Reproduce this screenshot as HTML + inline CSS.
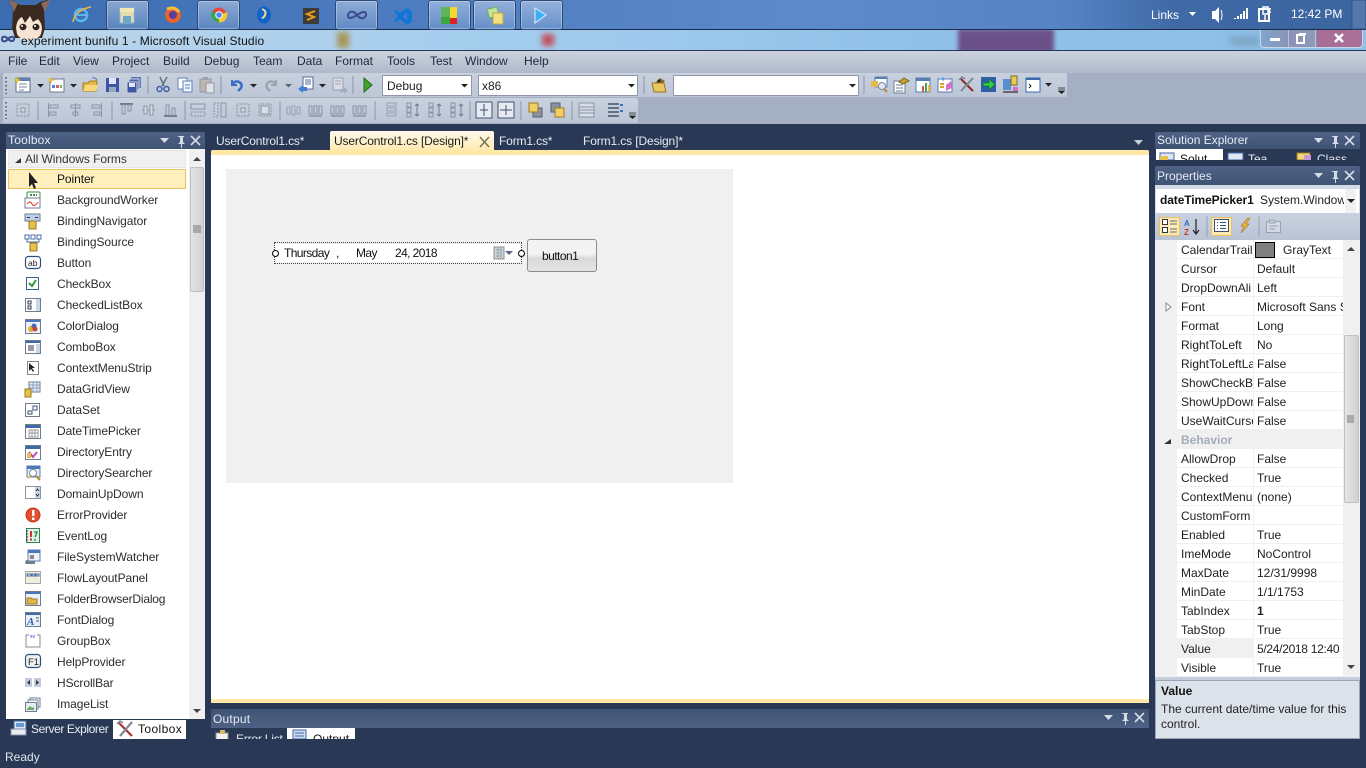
<!DOCTYPE html>
<html><head><meta charset="utf-8"><title>experiment bunifu 1 - Microsoft Visual Studio</title>
<style>
html,body{margin:0;padding:0;width:1366px;height:768px;overflow:hidden;background:#293955}
body{position:relative;font:12px "Liberation Sans",sans-serif;color:#1e1e1e}
div,span.t{position:absolute;white-space:nowrap}
.t{line-height:16px}
.w{color:#fff}
.m{top:53px;color:#1b2840;line-height:16px;position:absolute}
.h{background:linear-gradient(#4f6285,#3f5375)}
.r{position:absolute;left:1177px;width:166px;height:18px;border-bottom:1px solid #f0f0f0;background:#fff;line-height:20px}
.r b,.r i{position:absolute;top:0;font-style:normal;font-weight:normal;overflow:hidden;height:18px}
.r b{left:4px;width:72px}
.r i{left:80px;width:86px}
.r u{position:absolute;left:76px;top:0;width:1px;height:19px;background:#f0f0f0}
.tb{position:absolute;left:57px;line-height:16px;color:#2c2c2c;letter-spacing:-.08px}
.tk{position:absolute;top:0;height:28px;border:1px solid #2c4a78;border-radius:3px;background:linear-gradient(rgba(255,255,255,.38),rgba(255,255,255,.12));box-shadow:inset 0 0 0 1px rgba(255,255,255,.3)}
.cb{position:absolute;background:#fff;border:1px solid #8d97a8;border-radius:1px;height:21px;line-height:21px;box-sizing:border-box}
</style></head><body>

<!-- taskbar -->
<div style="left:0;top:0;width:1366px;height:29px;background:linear-gradient(90deg,#3b6cb0,#4d7dc0 30%,#5d8aca 60%,#5583c4 78%,#3f6aa6 86%,#3c659f)"></div>
<div style="left:0;top:29px;width:1366px;height:1px;background:#1b2b47"></div>
<div class="tk" style="left:106px;width:41px"></div>
<div class="tk" style="left:197px;width:41px"></div>
<div class="tk" style="left:335px;width:41px"></div>
<div class="tk" style="left:428px;width:41px"></div>
<div class="tk" style="left:473px;width:41px"></div>
<div class="tk" style="left:520px;width:41px"></div>
<div class="t w" style="left:1151px;top:7px">Links</div>
<div class="t w" style="left:1291px;top:6px">12:42 PM</div>

<!-- title -->
<div style="left:0;top:30px;width:1366px;height:20px;background:linear-gradient(90deg,#bcd5ea,#a8cfee 30%,#8fc0e8 70%,#8dbfe8);overflow:hidden">
 <div style="left:337px;top:2px;width:12px;height:16px;background:#a8985a;filter:blur(3px)"></div>
 <div style="left:542px;top:4px;width:12px;height:12px;background:#c25060;filter:blur(3px)"></div>
 <div style="left:958px;top:-1px;width:96px;height:24px;background:#6c5088;filter:blur(2px)"></div>
 <div style="left:1230px;top:6px;width:30px;height:10px;background:#7fa8c8;filter:blur(3px)"></div>
</div>
<div style="left:1260px;top:30px;width:101px;height:17px;background:linear-gradient(90deg,#7fa6cc 0,#8b93b8 28%,#8d9ab9 54%,#a66d96 56%,#ab7097 100%);border:1px solid #c9d8e8;border-top:0;border-radius:0 0 4px 4px"></div>
<div style="left:0;top:50px;width:1366px;height:1px;background:#24375a"></div>

<!-- menu -->
<div style="left:0;top:51px;width:1366px;height:22px;background:linear-gradient(#ccd3de,#aeb8c9)"></div>
<div style="left:0;top:73px;width:1366px;height:51px;background:#a4afc4"></div>
<span class="m" style="left:8px">File</span><span class="m" style="left:39px">Edit</span><span class="m" style="left:73px">View</span><span class="m" style="left:112px">Project</span><span class="m" style="left:163px">Build</span><span class="m" style="left:204px">Debug</span><span class="m" style="left:253px">Team</span><span class="m" style="left:297px">Data</span><span class="m" style="left:335px">Format</span><span class="m" style="left:387px">Tools</span><span class="m" style="left:430px">Test</span><span class="m" style="left:465px">Window</span><span class="m" style="left:524px">Help</span>

<!-- toolbars -->
<div style="left:3px;top:73px;width:1064px;height:24px;background:linear-gradient(#c9d1de,#bcc6d6);border-radius:2px"></div>
<div style="left:3px;top:98px;width:635px;height:25px;background:linear-gradient(#c9d1de,#bcc6d6);border-radius:2px"></div>
<div class="cb" style="left:382px;top:75px;width:90px;padding-left:4px">Debug</div>
<div class="cb" style="left:478px;top:75px;width:160px;padding-left:3px">x86</div>
<div class="cb" style="left:673px;top:75px;width:186px"></div>

<!-- dark area -->
<div style="left:0;top:124px;width:1366px;height:644px;background:#293955"></div>

<!-- toolbox -->
<div class="h" style="left:6px;top:132px;width:199px;height:17px;border-radius:2px 2px 0 0"></div>
<div class="t w" style="left:8px;top:132px;color:#e6ebf3;letter-spacing:.2px">Toolbox</div>
<div style="left:6px;top:149px;width:183px;height:570px;background:#fff"></div>
<div style="left:189px;top:149px;width:16px;height:570px;background:#f0f0f0"></div>
<div style="left:190px;top:167px;width:14px;height:125px;background:linear-gradient(90deg,#e4e4e4,#cfcfcf);border-radius:2px;box-shadow:inset 0 0 0 1px #c0c0c0"></div>
<div style="left:8px;top:150px;width:178px;height:18px;background:#f0f0f0;border:1px solid #e6e6e6;box-sizing:border-box"></div>
<div class="t" style="left:25px;top:151px;color:#333;letter-spacing:-.05px">All Windows Forms</div>
<div style="left:8px;top:169px;width:178px;height:20px;box-sizing:border-box;background:#ffefbd;border:1px solid #e5c365"></div>
<span class="tb" style="top:171px;color:#111">Pointer</span>
<span class="tb" style="top:192px">BackgroundWorker</span>
<span class="tb" style="top:213px">BindingNavigator</span>
<span class="tb" style="top:234px">BindingSource</span>
<span class="tb" style="top:255px">Button</span>
<span class="tb" style="top:276px">CheckBox</span>
<span class="tb" style="top:297px">CheckedListBox</span>
<span class="tb" style="top:318px">ColorDialog</span>
<span class="tb" style="top:339px">ComboBox</span>
<span class="tb" style="top:360px">ContextMenuStrip</span>
<span class="tb" style="top:381px">DataGridView</span>
<span class="tb" style="top:402px">DataSet</span>
<span class="tb" style="top:423px">DateTimePicker</span>
<span class="tb" style="top:444px">DirectoryEntry</span>
<span class="tb" style="top:465px">DirectorySearcher</span>
<span class="tb" style="top:486px">DomainUpDown</span>
<span class="tb" style="top:507px">ErrorProvider</span>
<span class="tb" style="top:528px">EventLog</span>
<span class="tb" style="top:549px">FileSystemWatcher</span>
<span class="tb" style="top:570px">FlowLayoutPanel</span>
<span class="tb" style="top:591px;letter-spacing:-.2px">FolderBrowserDialog</span>
<span class="tb" style="top:612px">FontDialog</span>
<span class="tb" style="top:633px">GroupBox</span>
<span class="tb" style="top:654px">HelpProvider</span>
<span class="tb" style="top:675px">HScrollBar</span>
<span class="tb" style="top:696px">ImageList</span>

<div style="left:113px;top:720px;width:73px;height:19px;background:#fff"></div>
<div class="t w" style="left:31px;top:721px;color:#e8edf4;letter-spacing:-.4px">Server Explorer</div>
<div class="t" style="left:138px;top:721px;color:#111;letter-spacing:.4px">Toolbox</div>
<div class="t" style="left:5px;top:749px;color:#dfe5ee">Ready</div>

<!-- document -->
<div class="t w" style="left:216px;top:133px;color:#e6ebf3;letter-spacing:-.15px">UserControl1.cs*</div>
<div style="left:330px;top:131px;width:164px;height:20px;background:linear-gradient(#fffaf0,#ffe9ac);border-radius:2px 2px 0 0"></div>
<div class="t" style="left:334px;top:133px;color:#1c1c1c;letter-spacing:-.15px">UserControl1.cs [Design]*</div>
<div class="t w" style="left:499px;top:133px;color:#e6ebf3;letter-spacing:-.15px">Form1.cs*</div>
<div class="t w" style="left:583px;top:133px;color:#e6ebf3;letter-spacing:-.12px">Form1.cs [Design]*</div>
<div style="left:211px;top:150px;width:938px;height:553px;background:#fff;border-radius:2px"></div>
<div style="left:211px;top:150px;width:938px;height:5px;background:#ffe8a6;border-radius:2px 2px 0 0"></div>
<div style="left:211px;top:699px;width:938px;height:4px;background:#ffe8a6"></div>
<div style="left:226px;top:169px;width:507px;height:314px;background:#f0f0f0"></div>
<div style="left:274px;top:242px;width:248px;height:22px;box-sizing:border-box;border:1px dotted #444"></div>
<div style="left:276px;top:244px;width:244px;height:18px;background:#fff"></div>
<div class="t" style="left:284px;top:245px;letter-spacing:-.6px;color:#111">Thursday</div>
<div class="t" style="left:336px;top:245px;color:#111">,</div>
<div class="t" style="left:356px;top:245px;letter-spacing:-.6px;color:#111">May</div>
<div class="t" style="left:395px;top:245px;letter-spacing:-.6px;color:#111">24, 2018</div>
<div style="left:272px;top:250px;width:5px;height:5px;background:#fff;border:1px solid #000;border-radius:50%"></div>
<div style="left:518px;top:250px;width:5px;height:5px;background:#fff;border:1px solid #000;border-radius:50%"></div>
<div style="left:527px;top:239px;width:70px;height:33px;box-sizing:border-box;background:linear-gradient(#f3f3f3 45%,#d9d9d9 60%,#e4e4e4);border:1px solid #8c8c8c;border-radius:3px"></div>
<div class="t" style="left:542px;top:248px;letter-spacing:-.55px;color:#111">button1</div>

<!-- output -->
<div class="h" style="left:211px;top:709px;width:938px;height:19px;background:linear-gradient(#3f5375,#4f6285)"></div>
<div class="t w" style="left:213px;top:711px;color:#e6ebf3;letter-spacing:.2px">Output</div>
<div style="left:287px;top:728px;width:68px;height:11px;background:#fff"></div>
<div style="left:236px;top:731px;height:8px;overflow:hidden;color:#e6ebf3;line-height:16px;letter-spacing:-.2px">Error List</div>
<div style="left:313px;top:731px;height:8px;overflow:hidden;color:#111;line-height:16px">Output</div>

<!-- solution explorer -->
<div class="h" style="left:1155px;top:132px;width:205px;height:17px;border-radius:2px 2px 0 0"></div>
<div class="t w" style="left:1157px;top:132px;color:#e6ebf3">Solution Explorer</div>
<div style="left:1156px;top:149px;width:67px;height:11px;background:#fff"></div>
<div style="left:1180px;top:151px;height:9px;overflow:hidden;color:#111;line-height:16px">Solut</div>
<div style="left:1248px;top:151px;height:9px;overflow:hidden;color:#e6ebf3;line-height:16px">Tea</div>
<div style="left:1317px;top:151px;height:9px;overflow:hidden;color:#e6ebf3;line-height:16px">Class</div>

<!-- properties -->
<div class="h" style="left:1155px;top:166px;width:205px;height:19px;border-radius:2px 2px 0 0"></div>
<div class="t w" style="left:1157px;top:168px;color:#e6ebf3">Properties</div>
<div style="left:1155px;top:185px;width:205px;height:492px;background:#d4dbe6"></div>
<div style="left:1156px;top:189px;width:203px;height:24px;background:#fff"></div>
<div style="left:1345px;top:189px;width:11px;height:24px;background:#f0f0f0"></div>
<div style="left:1160px;top:192px;line-height:16px;font-weight:bold;color:#111;letter-spacing:-.1px">dateTimePicker1</div>
<div style="left:1260px;top:192px;width:84px;overflow:hidden;line-height:16px;color:#222">System.Window</div>
<div style="left:1155px;top:213px;width:205px;height:27px;background:linear-gradient(#c9d2df,#b8c3d5)"></div>
<div style="left:1159px;top:217px;width:21px;height:19px;background:#ffeab5;border:1px solid #e5c365;box-sizing:border-box"></div>
<div style="left:1211px;top:217px;width:21px;height:19px;background:#ffeab5;border:1px solid #e5c365;box-sizing:border-box"></div>
<div style="left:1155px;top:240px;width:188px;height:437px;background:#f0f0f0"></div>
<div style="left:1343px;top:240px;width:17px;height:437px;background:#f0f0f0"></div>
<div style="left:1344px;top:335px;width:15px;height:168px;background:linear-gradient(90deg,#e6e6e6,#cfcfcf);border-radius:2px;box-shadow:inset 0 0 0 1px #c0c0c0"></div>

<div class="r" style="top:240px"><b>CalendarTrail</b><u></u><i style="left:106px;width:60px">GrayText</i></div>
<div class="r" style="top:259px"><b>Cursor</b><u></u><i>Default</i></div>
<div class="r" style="top:278px"><b>DropDownAli</b><u></u><i>Left</i></div>
<div class="r" style="top:297px"><b>Font</b><u></u><i>Microsoft Sans Serif</i></div>
<div class="r" style="top:316px"><b>Format</b><u></u><i>Long</i></div>
<div class="r" style="top:335px"><b>RightToLeft</b><u></u><i>No</i></div>
<div class="r" style="top:354px"><b>RightToLeftLa</b><u></u><i>False</i></div>
<div class="r" style="top:373px"><b>ShowCheckBo</b><u></u><i>False</i></div>
<div class="r" style="top:392px"><b>ShowUpDown</b><u></u><i>False</i></div>
<div class="r" style="top:411px"><b>UseWaitCursor</b><u></u><i>False</i></div>
<div class="r" style="top:430px;background:#f0f0f0"><b style="color:#a3abbb;font-weight:bold">Behavior</b></div>
<div class="r" style="top:449px"><b>AllowDrop</b><u></u><i>False</i></div>
<div class="r" style="top:468px"><b>Checked</b><u></u><i>True</i></div>
<div class="r" style="top:487px"><b>ContextMenu</b><u></u><i>(none)</i></div>
<div class="r" style="top:506px"><b>CustomForm</b><u></u><i></i></div>
<div class="r" style="top:525px"><b>Enabled</b><u></u><i>True</i></div>
<div class="r" style="top:544px"><b>ImeMode</b><u></u><i>NoControl</i></div>
<div class="r" style="top:563px"><b>MaxDate</b><u></u><i>12/31/9998</i></div>
<div class="r" style="top:582px"><b>MinDate</b><u></u><i>1/1/1753</i></div>
<div class="r" style="top:601px"><b>TabIndex</b><u></u><i style="font-weight:bold">1</i></div>
<div class="r" style="top:620px"><b>TabStop</b><u></u><i>True</i></div>
<div class="r" style="top:639px"><b style="background:#f0f0f0;width:72px;left:0;padding-left:4px">Value</b><u></u><i style="letter-spacing:-.3px">5/24/2018 12:40</i></div>
<div class="r" style="top:658px"><b>Visible</b><u></u><i>True</i></div>
<div style="left:1255px;top:242px;width:18px;height:14px;background:#808080;border:1px solid #000"></div>

<div style="left:1155px;top:680px;width:205px;height:59px;box-sizing:border-box;background:#dce2ea;border:1px solid #9aa5b6"></div>
<div style="left:1155px;top:677px;width:205px;height:3px;background:#c6cedb"></div>
<div style="left:1161px;top:683px;line-height:16px;font-weight:bold;color:#111">Value</div>
<div style="left:1161px;top:702px;line-height:15px;color:#222;white-space:normal;width:195px">The current date/time value for this control.</div>

<!-- icons layer -->
<svg width="1366" height="768" viewBox="0 0 1366 768" style="position:absolute;left:0;top:0">
<defs>
<g id="tri"><path d="M0 0h7l-3.500 3.500z" fill="#222"/></g>
<g id="hdr"><path d="M0 0h9l-4.500 5z" fill="#d5dce8"/><path d="M17-2h7v1h-1v5l2 2h-3v4h-1V6h-3l2-2v-5h-1z" fill="#d5dce8"/><path d="M31-2l9 9M40-2l-9 9" stroke="#d5dce8" stroke-width="1.600"/></g>
<g id="al"><rect x="3" y="1" width="1" height="14" fill="#8a94a4"/><rect x="5" y="3" width="8" height="3" fill="none" stroke="#8a94a4"/><rect x="5" y="10" width="6" height="3" fill="none" stroke="#8a94a4"/></g>
<g id="cn"><rect x="7" y="1" width="1" height="14" fill="#8a94a4"/><rect x="3" y="3" width="9" height="3" fill="none" stroke="#8a94a4"/><rect x="5" y="10" width="5" height="3" fill="none" stroke="#8a94a4"/></g>
<g id="sp"><rect x="1" y="4" width="3" height="8" fill="none" stroke="#8a94a4"/><rect x="6" y="4" width="3" height="8" fill="none" stroke="#8a94a4"/><rect x="11" y="4" width="3" height="8" fill="none" stroke="#8a94a4"/><path d="M1 14h13" stroke="#6f7b8e"/></g>
<g id="sp2"><rect x="2" y="1" width="4" height="4" fill="none" stroke="#8a94a4"/><rect x="2" y="11" width="4" height="4" fill="none" stroke="#8a94a4"/><rect x="2" y="6" width="4" height="4" fill="none" stroke="#8a94a4"/><path d="M12 2v12M10 4l2-2 2 2M10 12l2 2 2-2" fill="none" stroke="#6f7b8e"/></g>
<g id="sz"><rect x="2" y="2" width="12" height="12" fill="none" stroke="#8a94a4" stroke-dasharray="2 1"/><rect x="6" y="6" width="4" height="4" fill="#d8dde6" stroke="#8a94a4"/></g>
<g id="doc"><rect x="1" y="1" width="14" height="14" fill="#fff" stroke="#5c6f8e"/><rect x="1" y="1" width="14" height="3" fill="#5a80b5"/><path d="M4 7h8M4 10h8M4 13h5" stroke="#7a8aa5"/></g>
</defs>

<!-- taskbar icons -->
<g fill="none">
<circle cx="81" cy="15" r="6" stroke="#5ab6ee" stroke-width="2.500"/><path d="M73 22q2-12 18-15" stroke="#f2b540" stroke-width="1.500"/><path d="M76 15h11" stroke="#5ab6ee" stroke-width="2"/>
<rect x="120" y="8" width="14" height="15" rx="1" fill="#e5dcae" stroke="#8fb9d6"/><rect x="120" y="8" width="14" height="4" fill="#f2e8b5"/><rect x="123" y="16" width="8" height="7" fill="#6aa7c8"/>
<circle cx="173" cy="15" r="8" fill="#e8642a"/><circle cx="173" cy="15" r="4" fill="#5a3fa0"/><path d="M167 9q8-3 12 3" stroke="#f7c03a" stroke-width="3"/>
<circle cx="219" cy="15" r="7.500" fill="#e04b3c"/><path d="M219 15L212 11A8 8 0 0 0 219 22.500z" fill="#3aa757"/><path d="M219 15L227 12A8 8 0 0 1 219 22.500z" fill="#f8c62e"/><circle cx="219" cy="15" r="3.300" fill="#4a8cf0" stroke="#fff"/>
<ellipse cx="264" cy="15" rx="7" ry="8.500" fill="#0d63c6"/><path d="M262 9q5 2 3 6t-3 2" stroke="#f4d7a0" stroke-width="2"/>
<rect x="303" y="8" width="16" height="16" fill="#3b3b3b"/><path d="M315 11l-8 3 7 3-7 3" stroke="#f29a1f" stroke-width="2"/>
<path d="M357 15c-3-4-6-4-8-2s-1 5 1 5 4-1 7-3 5-3 7-3 3 3 1 5-5 2-8-2z" stroke="#3c4c8c" stroke-width="2"/>
<path fill-rule="evenodd" d="M407 8l5 3v11l-5 3-7-6-4 3-2-1.500 4-4.500-4-4.500 2-1.500 4 3zM407 12.500l-4 4 4 3.500z" fill="#1276d6"/>
<rect x="441" y="7" width="9" height="10" fill="#5fb55a"/><rect x="441" y="17" width="9" height="7" fill="#3aa83a"/><rect x="450" y="7" width="7" height="11" fill="#f2d72f"/><rect x="450" y="18" width="7" height="6" fill="#e02020"/>
<rect x="488" y="8" width="10" height="9" fill="#bfe59a" stroke="#7da86a" transform="rotate(-15 493 12)"/><rect x="493" y="13" width="10" height="11" fill="#f2e27f" stroke="#b9a84a"/>
<path d="M535 8l11 7-11 8z" fill="#3fb0f2" stroke="#dff1ff"/>
<path d="M1189 12h7l-3.500 4z" fill="#fff"/>
<path d="M1212 11h3l4-4v16l-4-4h-3z" fill="#fff"/><path d="M1221 10q2 5 0 10" stroke="#fff"/>
<path d="M1234 18h2v1h-2zM1237 16h2v3h-2zM1240 14h2v5h-2zM1243 11h2v8h-2zM1246 8h2v11h-2z" fill="#fff"/>
<rect x="1259" y="9" width="10" height="12" fill="none" stroke="#fff" stroke-width="2"/><path d="M1263 7h5v7h-5zM1268 9h3M1268 12h3M1265 15v5" stroke="#fff" stroke-width="1.500"/>
</g>
<rect x="1352" y="0" width="14" height="29" fill="#5478ab" stroke="#33527f"/>

<!-- avatar -->
<path d="M9 0l4 10-1 18 3 10h27l3-10-1-18 4-10-8 2-4 3H20l-4-3z" fill="#3a2a22"/>
<path d="M9 0l5 12 4-9zM50 0l-5 12-4-9z" fill="#8a6c5c"/>
<path d="M16 28q1-9 6-11l3 6 5-7 3 6 5-3q4 4 4 10l-1 5q-3 6-12 6t-12-6z" fill="#f8e4d4"/>
<ellipse cx="23" cy="27" rx="3.500" ry="3.200" fill="#2f2420"/><ellipse cx="36" cy="27" rx="3.500" ry="3.200" fill="#2f2420"/>
<circle cx="22" cy="26" r="1" fill="#fff"/><circle cx="35" cy="26" r="1" fill="#fff"/>

<!-- title icon and controls -->
<path d="M7 38c-2-2-5-2-5 1s3 3 5 1 4-4 6-3 1 4-1 4-3-1-5-3z" fill="none" stroke="#3c4c8c" stroke-width="2"/>
<rect x="1270" y="38" width="10" height="3" fill="#fff"/>
<rect x="1297" y="35" width="7" height="8" fill="none" stroke="#fff" stroke-width="2"/><rect x="1299" y="33" width="7" height="2" fill="#fff"/>
<path d="M1335 34l8 8M1343 34l-8 8" stroke="#fff" stroke-width="2.500"/>
<rect x="1288" y="30" width="1" height="17" fill="#c9d8e8" opacity=".7"/><rect x="1315" y="30" width="1" height="17" fill="#c9d8e8" opacity=".7"/>

<!-- gripper -->
<path d="M6 77v17" stroke="#3f4e66" stroke-dasharray="1.500 2.500" stroke-width="1.500"/><path d="M6 102v17" stroke="#3f4e66" stroke-dasharray="1.500 2.500" stroke-width="1.500"/>
<path d="M148 76v18M221 76v18M353 76v18M644 76v18M864 76v18M38 101v19M112 101v19M185 101v19M280 101v19M375 101v19M470 101v19M521 101v19M572 101v19" stroke="#8b96aa"/>

<!-- row1 icons -->
<g transform="translate(15,77)"><use href="#doc"/><path d="M2-1l1 3 3 1-3 1-1 3-1-3-3-1 3-1z" fill="#f2c02f"/></g>
<use href="#tri" x="37" y="84"/>
<g transform="translate(49,77)"><rect x="1" y="2" width="14" height="13" fill="#fff" stroke="#6d7c93"/><rect x="3" y="8" width="3" height="3" fill="#4f86c8"/><rect x="7" y="8" width="3" height="3" fill="#d75e5e"/><rect x="11" y="8" width="2" height="3" fill="#6fb35a"/><path d="M2-1l1 3 3 1-3 1-1 3-1-3-3-1 3-1z" fill="#f2c02f"/></g>
<use href="#tri" x="70" y="84"/>
<g transform="translate(82,77)"><path d="M1 6h5l2-2h7l-1 10H1z" fill="#e8b648" stroke="#a77a1e"/><path d="M1 14l3-6h12l-2 6z" fill="#f8d878"/><path d="M10 1q3-1 5 2" stroke="#4a7ac0" fill="none"/></g>
<g transform="translate(105,77)"><rect x="1" y="1" width="13" height="14" fill="#3d55a8"/><rect x="4" y="1" width="7" height="6" fill="#dfe6f5"/><rect x="4" y="10" width="7" height="5" fill="#9ab"/></g>
<g transform="translate(126,77)"><rect x="5" y="0" width="10" height="11" fill="#5d78b8"/><rect x="3" y="2" width="10" height="11" fill="#4b62ac" stroke="#c9d1de"/><rect x="1" y="5" width="10" height="11" fill="#3d55a8" stroke="#c9d1de"/><rect x="3" y="6" width="6" height="4" fill="#dfe6f5"/></g>
<g transform="translate(155,77)" fill="none"><path d="M5 0l4 9M12 0L7 9" stroke="#60707f" stroke-width="1.500"/><circle cx="4.500" cy="12" r="2.500" stroke="#3a5fa5" stroke-width="1.500"/><circle cx="11.500" cy="12" r="2.500" stroke="#3a5fa5" stroke-width="1.500"/></g>
<g transform="translate(177,77)"><rect x="1" y="1" width="9" height="11" fill="#fff" stroke="#5e82bc"/><rect x="6" y="4" width="9" height="11" fill="#eef3fb" stroke="#5e82bc"/><path d="M8 8h5M8 11h5" stroke="#5e82bc"/></g>
<g transform="translate(199,77)" opacity=".65"><rect x="1" y="2" width="11" height="13" fill="#b8ad94" stroke="#76808f"/><rect x="4" y="0" width="5" height="3" fill="#888"/><rect x="7" y="6" width="8" height="10" fill="#eee" stroke="#76808f"/></g>
<g transform="translate(228,77)" fill="none"><path d="M4 3v5h5" stroke="#3b6fc5" stroke-width="2"/><path d="M4 8q3-5 7-3t2 6l-3 3" stroke="#3b6fc5" stroke-width="2.500"/></g>
<use href="#tri" x="250" y="84"/>
<g transform="translate(264,77)" fill="none" opacity=".55"><path d="M12 3v5H7" stroke="#7b8797" stroke-width="2"/><path d="M12 8q-3-5-7-3t-2 6l3 3" stroke="#7b8797" stroke-width="2.500"/></g>
<use href="#tri" x="285" y="84" opacity=".6"/>
<g transform="translate(298,76)"><rect x="5" y="1" width="10" height="12" fill="#fff" stroke="#5068a0"/><path d="M7 4h6M7 6h6M7 8h6" stroke="#5068a0"/><path d="M0 13l5-4v2h4v4H5v2z" fill="#3f7fd0"/></g>
<use href="#tri" x="319" y="84"/>
<g transform="translate(332,77)" opacity=".55"><rect x="1" y="1" width="10" height="12" fill="#eee" stroke="#78818f"/><path d="M3 4h6M3 7h6" stroke="#78818f"/><path d="M8 12h4v-2l4 3.500-4 3.500v-2H8z" fill="#8a94a4"/></g>
<path d="M364 78l8 7-8 7z" fill="#3fa52a" stroke="#276a18"/>
<use href="#tri" x="461" y="84"/><use href="#tri" x="628" y="84"/><use href="#tri" x="849" y="84"/>
<g transform="translate(651,77)"><path d="M1 6h12l2 9H3z" fill="#e9c660" stroke="#9a7720"/><path d="M4 6l5-5 5 3-2 2z" fill="#8b6b2c"/><circle cx="8" cy="4" r="1.500" fill="#222"/></g>
<g transform="translate(871,77)"><rect x="4" y="0" width="12" height="10" fill="#fff" stroke="#5a7cb2"/><rect x="4" y="0" width="12" height="2" fill="#5a7cb2"/><rect x="0" y="4" width="7" height="6" fill="#e6b94f"/><circle cx="11" cy="9" r="3.500" fill="#dfe9f5" stroke="#7c8aa0"/><path d="M13 12l3 3" stroke="#b28a3a" stroke-width="2"/></g>
<g transform="translate(893,77)"><rect x="1" y="4" width="11" height="12" fill="#fff" stroke="#6d7c93"/><path d="M3 8h7M3 11h7M3 14h7" stroke="#6d7c93"/><path d="M6 5l5-4 5 3-6 3z" fill="#c7a531" stroke="#7d6a1e"/></g>
<g transform="translate(915,77)"><rect x="1" y="1" width="14" height="14" fill="#fff" stroke="#5a7cb2"/><rect x="1" y="1" width="14" height="3" fill="#5a7cb2"/><rect x="7" y="9" width="2" height="6" fill="#d45a4f"/><rect x="10" y="6" width="2" height="9" fill="#4fa04a"/><rect x="13" y="8" width="2" height="7" fill="#e6b94f"/></g>
<g transform="translate(937,77)"><rect x="1" y="2" width="14" height="13" fill="#fff" stroke="#5a7cb2"/><path d="M6 0l2 2-2 2-2-2z" fill="#5a9be8"/><path d="M9 8l5-4 1 7-6 3z" fill="#d973c9"/><path d="M3 7h4M3 10h4" stroke="#d8a62c" stroke-width="2"/></g>
<g transform="translate(959,77)" fill="none"><path d="M2 2l12 12" stroke="#8d2a2a" stroke-width="2"/><path d="M14 1L2 14" stroke="#7d8794" stroke-width="2"/><path d="M0 3l3-3 3 2" stroke="#7d8794" stroke-width="1.500"/></g>
<g transform="translate(981,77)"><rect x="0" y="0" width="15" height="15" fill="#2f5fa8"/><path d="M2 6h6V2l6 5.500L8 13V9H2z" fill="#30d040" stroke="#106c18" stroke-width=".6"/></g>
<g transform="translate(1003,76)"><rect x="0" y="3" width="8" height="11" fill="#5a8fd0"/><rect x="8" y="0" width="6" height="9" fill="#e8c95a" stroke="#7b6a25"/><rect x="10" y="11" width="5" height="5" fill="#d86fc4"/><rect x="0" y="15" width="15" height="2" fill="#666"/></g>
<g transform="translate(1026,78)"><rect x="0" y="0" width="14" height="14" fill="#fff" stroke="#3b68ac"/><rect x="0" y="0" width="14" height="2" fill="#3b68ac"/><path d="M3 6l2 2-2 2" stroke="#222" fill="none"/></g>
<use href="#tri" x="1045" y="83"/>
<path d="M1058 88h7M1058 90h7" stroke="#222" stroke-width=".8"/><path d="M1058 91h7l-3.500 3z" fill="#222"/>

<!-- row2 icons -->
<g transform="translate(15,102)"><use href="#sz"/></g>
<use href="#al" x="45" y="102"/><use href="#cn" x="68" y="102"/><g transform="translate(90,102) scale(-1,1) translate(-15,0)"><use href="#al"/></g>
<g transform="translate(119,102)"><path d="M1 2h13" stroke="#6f7b8e" stroke-width="2"/><rect x="3" y="3" width="3" height="9" fill="none" stroke="#8a94a4"/><rect x="9" y="3" width="3" height="6" fill="none" stroke="#8a94a4"/></g>
<g transform="translate(141,102)"><path d="M1 8h13" stroke="#8a94a4"/><rect x="3" y="4" width="3" height="8" fill="#d8dde6" stroke="#8a94a4"/><rect x="9" y="3" width="3" height="10" fill="#d8dde6" stroke="#8a94a4"/></g>
<g transform="translate(163,102)"><path d="M1 14h13" stroke="#6f7b8e" stroke-width="2"/><rect x="3" y="3" width="3" height="10" fill="none" stroke="#8a94a4"/><rect x="9" y="6" width="3" height="7" fill="none" stroke="#8a94a4"/></g>
<g transform="translate(190,102)"><rect x="1" y="2" width="14" height="5" fill="none" stroke="#8a94a4"/><rect x="1" y="10" width="14" height="4" fill="none" stroke="#8a94a4" stroke-dasharray="2 1"/></g>
<g transform="translate(212,102)"><rect x="2" y="1" width="4" height="14" fill="none" stroke="#8a94a4" stroke-dasharray="2 1"/><rect x="9" y="1" width="5" height="14" fill="none" stroke="#8a94a4"/></g>
<use href="#sz" x="235" y="102"/><g transform="translate(257,102)"><use href="#sz"/><rect x="4" y="4" width="8" height="8" fill="#d8dde6" stroke="#8a94a4"/></g>
<g transform="translate(286,102)" opacity=".75"><rect x="1" y="5" width="3" height="7" fill="none" stroke="#8a94a4"/><rect x="6" y="4" width="3" height="9" fill="none" stroke="#8a94a4"/><rect x="11" y="5" width="3" height="7" fill="none" stroke="#8a94a4"/></g>
<use href="#sp" x="308" y="102"/><use href="#sp" x="330" y="102"/><use href="#sp" x="352" y="102"/>
<g transform="translate(385,102)" opacity=".75"><rect x="2" y="1" width="9" height="3" fill="none" stroke="#8a94a4"/><rect x="2" y="6" width="9" height="3" fill="none" stroke="#8a94a4"/><rect x="2" y="11" width="9" height="3" fill="none" stroke="#8a94a4"/></g>
<use href="#sp2" x="405" y="102"/><use href="#sp2" x="427" y="102"/><use href="#sp2" x="449" y="102"/>
<g transform="translate(476,102)"><rect x="0" y="0" width="16" height="16" fill="#e6eaf1" stroke="#44536c"/><path d="M8 2v12M4 8h8" stroke="#44536c"/></g>
<g transform="translate(498,102)"><rect x="0" y="0" width="16" height="16" fill="#e6eaf1" stroke="#44536c"/><path d="M2 8h12M8 3v10" stroke="#44536c"/></g>
<g transform="translate(528,102)"><rect x="5" y="6" width="9" height="9" fill="#8b94a3" stroke="#545e6e"/><rect x="1" y="1" width="9" height="9" fill="#f2cf63" stroke="#9a7b1e"/></g>
<g transform="translate(550,102)"><rect x="1" y="1" width="9" height="9" fill="#8b94a3" stroke="#545e6e"/><rect x="5" y="6" width="9" height="9" fill="#f2cf63" stroke="#9a7b1e"/></g>
<g transform="translate(579,102)"><rect x="0" y="1" width="15" height="14" fill="#d8dde6" stroke="#8a94a4"/><path d="M0 5h15M0 8h15M0 11h15" stroke="#8a94a4"/></g>
<g transform="translate(607,102)"><path d="M1 2h11M1 6h11M1 10h11M1 14h11" stroke="#44536c" stroke-width="1.500"/><path d="M13 2h3v2h-3zM13 8h3v2h-3z" fill="#3d6fc0"/></g>
<path d="M629 113h7M629 115h7" stroke="#222" stroke-width=".8"/><path d="M629 116h7l-3.500 3z" fill="#222"/>

<!-- panel header icons -->
<use href="#hdr" x="160" y="138"/>
<use href="#hdr" x="1314" y="138"/>
<use href="#hdr" x="1314" y="173"/>
<use href="#hdr" x="1104" y="715"/>
<path d="M1134 140h9l-4.500 5z" fill="#c7cfdd"/>
<path d="M480 137l9 10M489 137l-9 10" stroke="#7b6f55" stroke-width="1.500"/>

<!-- scroll arrows -->
<path d="M193 161h8l-4-4z" fill="#444"/><path d="M193 709h8l-4 4z" fill="#444"/>
<path d="M193 226h8M193 228h8M193 230h8M193 232h8" stroke="#777"/>
<path d="M1347 251h8l-4-4z" fill="#444"/><path d="M1347 665h8l-4 4z" fill="#444"/>
<path d="M1347 416h7M1347 418h7M1347 420h7M1347 422h7" stroke="#777"/>
<path d="M15 163l6-5v5z" fill="#333"/>
<path d="M1166 303l5 4-5 4z" fill="#fff" stroke="#8a8a8a"/>
<path d="M1164 444l7-5v5z" fill="#333"/>
<path d="M1347 199h8l-4 4z" fill="#222"/>

<!-- DTP icon -->
<rect x="494" y="247" width="10" height="12" fill="#d0d4da" stroke="#8c8c8c"/><path d="M496 250h6M496 253h6M496 256h6M498 248v10M501 248v10" stroke="#9aa"/>
<path d="M505 251h8l-4 4z" fill="#5c6880"/>

<!-- toolbox icons -->
<path d="M29 172v15l3-3 2 5 2-1-2-5h4z" fill="#222"/>
<g transform="translate(25,192)"><rect x="2" y="0" width="13" height="7" rx="1" fill="#fff" stroke="#3f8a4a"/><path d="M5 3h7" stroke="#3f8a4a" stroke-width="2" stroke-dasharray="2 1"/><rect x="0" y="6" width="15" height="10" fill="#fff" stroke="#6d7c93"/><path d="M2 12q3-4 5 0t6-2" fill="none" stroke="#d33"/></g>
<g transform="translate(25,214)"><rect x="0" y="0" width="15" height="7" fill="#bcd0ea" stroke="#6d7c93"/><rect x="4" y="7" width="7" height="8" fill="#e8c050" stroke="#9a7b1e"/><path d="M2 3.500h3M10 3.500h3" stroke="#334"/></g>
<g transform="translate(25,235)"><rect x="0" y="0" width="4" height="4" fill="#fff" stroke="#4a6fa8"/><rect x="6" y="0" width="4" height="4" fill="#fff" stroke="#4a6fa8"/><rect x="12" y="0" width="4" height="4" fill="#fff" stroke="#4a6fa8"/><path d="M2 4v3h12V4" fill="none" stroke="#4a6fa8"/><rect x="5" y="8" width="7" height="8" fill="#e8c050" stroke="#9a7b1e"/></g>
<rect x="25.500" y="256.500" width="15" height="12" rx="3" fill="#fff" stroke="#2e4f7c" stroke-width="1.200"/>
<text x="28" y="266" font-family="Liberation Sans" font-size="8.500" fill="#222">ab</text>
<g transform="translate(26,277)"><rect x=".5" y=".5" width="12" height="12" fill="#fff" stroke="#3d5f8e"/><path d="M3 6l3 3 4-6" fill="none" stroke="#2e9b3e" stroke-width="2"/></g>
<g transform="translate(25,298)"><rect x=".5" y=".5" width="15" height="13" fill="#fff" stroke="#6d7c93"/><path d="M3 3h3v3H3zM3 8h3v3H3z" fill="none" stroke="#334"/><rect x="11" y="1" width="4" height="12" fill="#c8d6ea"/></g>
<g transform="translate(25,319)"><rect x=".5" y=".5" width="15" height="14" fill="#eef2f8" stroke="#6d7c93"/><rect x="1" y="1" width="14" height="2" fill="#4a78b8"/><circle cx="6" cy="10" r="3" fill="#d8b03a"/><circle cx="9" cy="7" r="2.500" fill="#3c6cc0"/><circle cx="10" cy="10" r="2.500" fill="#c84040"/></g>
<g transform="translate(25,340)"><rect x=".5" y=".5" width="15" height="13" fill="#fff" stroke="#6d7c93"/><rect x="1" y="1" width="14" height="2" fill="#3f6aa8"/><path d="M3 6h6M3 8h6M3 10h6" stroke="#334"/><rect x="11" y="4" width="4" height="9" fill="#c8d6ea"/></g>
<g transform="translate(27,361)"><rect x=".5" y=".5" width="11" height="13" fill="#fff" stroke="#888"/><path d="M2 2v8l2-2 2 3 1-1-2-3h3z" fill="#222"/></g>
<g transform="translate(25,382)"><rect x="4" y="0" width="11" height="10" fill="#e6ecf5" stroke="#6d7c93"/><path d="M4 3h11M4 6h11M8 0v10M12 0v10" stroke="#8ba0bf"/><rect x="0" y="7" width="6" height="8" fill="#e8c050" stroke="#9a7b1e"/></g>
<g transform="translate(25,403)"><rect x=".5" y=".5" width="14" height="13" fill="#fff" stroke="#6d7c93"/><rect x="8" y="3" width="4" height="4" fill="#fff" stroke="#3c4f70"/><rect x="3" y="8" width="4" height="3" fill="#fff" stroke="#3c4f70"/></g>
<g transform="translate(25,424)"><rect x=".5" y=".5" width="15" height="14" fill="#fff" stroke="#6d7c93"/><rect x="1" y="1" width="14" height="3" fill="#3f6aa8"/><path d="M4 6h9v7H4zM7 6v7M10 6v7M4 9h9" fill="none" stroke="#999"/></g>
<g transform="translate(25,445)"><rect x=".5" y=".5" width="15" height="14" fill="#fff" stroke="#6d7c93"/><rect x="1" y="1" width="14" height="3" fill="#3f6aa8"/><path d="M4 7l4 5 4-5" fill="none" stroke="#b64fb0" stroke-width="2"/><rect x="2" y="8" width="4" height="5" fill="#e8c050"/></g>
<g transform="translate(25,465)"><rect x="2" y="1" width="13" height="11" fill="#e6ecf5" stroke="#5a7cb2"/><rect x="2" y="1" width="13" height="3" fill="#4a78b8"/><circle cx="8" cy="8" r="3.500" fill="#fff" stroke="#7c8aa0"/><path d="M11 11l4 4" stroke="#b28a3a" stroke-width="2"/><circle cx="4" cy="12" r="1.500" fill="#e8c050"/></g>
<g transform="translate(25,486)"><rect x=".5" y=".5" width="15" height="12" fill="#fff" stroke="#8a94a4"/><rect x="10" y="1" width="5" height="11" fill="#c8d6ea"/><path d="M11 5l1.500-2 1.500 2M11 8l1.500 2 1.500-2" fill="none" stroke="#334"/></g>
<g transform="translate(25,507)"><circle cx="8" cy="8" r="7" fill="#e2502f" stroke="#b33a1e"/><rect x="7" y="3" width="2.500" height="6" fill="#fff"/><rect x="7" y="10.500" width="2.500" height="2.500" fill="#fff"/></g>
<g transform="translate(26,528)"><rect x=".5" y=".5" width="13" height="14" fill="#dff0e6" stroke="#3f7a64"/><path d="M0 3h2M0 6h2M0 9h2M0 12h2" stroke="#333"/><rect x="4" y="3" width="2" height="6" fill="#d83030"/><rect x="4" y="10.500" width="2" height="2" fill="#d83030"/><path d="M8 4h3l-1 3-1 2M9 11v2" stroke="#2d9a3e" fill="none" stroke-width="1.500"/></g>
<g transform="translate(25,549)"><rect x="3" y="1" width="12" height="11" fill="#eef2f8" stroke="#5a7cb2"/><rect x="3" y="1" width="12" height="3" fill="#4a78b8"/><rect x="5" y="6" width="4" height="4" fill="#888"/><path d="M0 14q1-5 4-2h6v3H1z" fill="#6d7c93"/></g>
<g transform="translate(25,571)"><rect x=".5" y=".5" width="15" height="12" fill="#f1eddc" stroke="#556" stroke-dasharray="1 1"/><path d="M2 3h4v2H2zM7 3h3v2H7zM11 3h3v2h-3z" fill="none" stroke="#3f6aa8"/></g>
<g transform="translate(25,591)"><rect x=".5" y=".5" width="15" height="14" fill="#eef2f8" stroke="#6d7c93"/><rect x="1" y="1" width="14" height="2" fill="#4a78b8"/><path d="M2 7h4l1 1h5v5H2z" fill="#e8b648" stroke="#9a7b1e"/></g>
<g transform="translate(25,612)"><rect x=".5" y=".5" width="15" height="14" fill="#e8eff8" stroke="#6d7c93"/><rect x="1" y="1" width="14" height="2" fill="#3f6aa8"/><text x="2" y="13" font-family="Liberation Serif" font-style="italic" font-weight="bold" font-size="11" fill="#2f5fb0">A</text><path d="M11 6h3M11 9h3" stroke="#555"/></g>
<g transform="translate(25,634)"><path d="M4 1H1v12h14V1h-3" fill="none" stroke="#888"/><text x="5" y="4" font-family="Liberation Sans" font-size="5" fill="#33c">xv</text></g>
<g transform="translate(25,654)"><rect x=".5" y=".5" width="15" height="13" rx="3" fill="#eef2f3" stroke="#2e4f7c" stroke-width="1.200"/><text x="3" y="11" font-family="Liberation Sans" font-size="9.500" fill="#222">F1</text></g>
<g transform="translate(25,678)"><rect x="0" y="0" width="7" height="9" fill="#c0cbe0"/><rect x="9" y="0" width="7" height="9" fill="#c0cbe0"/><path d="M5 2l-3 2.500 3 2.500M11 2l3 2.500-3 2.500" fill="#334"/></g>
<g transform="translate(25,697)"><rect x="5" y="1" width="10" height="9" fill="#fff" stroke="#6d7c93"/><rect x="3" y="3" width="10" height="9" fill="#fff" stroke="#6d7c93"/><rect x=".5" y="5.500" width="11" height="9" fill="#e6ecf5" stroke="#6d7c93"/><path d="M2 12l3-3 2 2 2-1v3H2z" fill="#6aa65c"/></g>
<g transform="translate(11,721)"><rect x="3" y="0" width="12" height="8" fill="#dfe7f2" stroke="#3f6aa8"/><rect x="5" y="2" width="8" height="4" fill="#6c97d2"/><rect x="0" y="8" width="15" height="6" fill="#e8ebef" stroke="#8090a8"/></g>
<g transform="translate(117,721)" fill="none"><path d="M2 2l13 13" stroke="#a33" stroke-width="2.200"/><path d="M15 1L3 15" stroke="#7d8794" stroke-width="2.200"/><path d="M0 3l3-3 3 2" stroke="#7d8794" stroke-width="1.500"/></g>

<!-- tab icons -->
<g transform="translate(216,730)"><rect x="0" y="3" width="12" height="9" fill="#f2f2f2" stroke="#999"/><rect x="4" y="0" width="5" height="4" fill="#d8b864"/></g>
<g transform="translate(293,730)"><rect x="0" y="0" width="13" height="9" fill="#cfdcf0" stroke="#3f6aa8"/><path d="M2 3h9M2 6h9" stroke="#3f6aa8"/></g>
<rect x="211" y="739" width="160" height="6" fill="#293955"/>
<g transform="translate(1160,153)"><rect x="0" y="0" width="14" height="7" fill="#dfe7f2" stroke="#3f6aa8"/><rect x="0" y="3" width="8" height="4" fill="#e8c050"/></g>
<g transform="translate(1228,153)"><rect x="0" y="0" width="15" height="7" fill="#dfe7f2" stroke="#3f6aa8"/></g>
<g transform="translate(1297,153)"><rect x="0" y="0" width="13" height="7" fill="#f2d878" stroke="#9a7b1e"/><rect x="7" y="2" width="7" height="5" fill="#c79ad8"/></g>
<rect x="1155" y="160" width="205" height="6" fill="#293955"/>

<!-- properties toolbar icons -->
<g transform="translate(1161,218)" fill="none" stroke="#333"><rect x="1.500" y="1.500" width="5" height="5" fill="#fff"/><rect x="1.500" y="9.500" width="5" height="5" fill="#fff"/><path d="M9 3h7M9 6h7M9 11h7M9 14h7" stroke="#667"/></g>
<text x="1184" y="226" font-family="Liberation Sans" font-size="8" font-weight="bold" fill="#3a6bc0">A</text><text x="1184" y="235" font-family="Liberation Sans" font-size="8" font-weight="bold" fill="#c0392b">Z</text>
<path d="M1196 219v14M1193 230l3 4 3-4" fill="none" stroke="#222" stroke-width="1.200"/>
<path d="M1207 216v21M1259 216v21" stroke="#93a0b4"/>
<g transform="translate(1214,219)"><rect x=".5" y=".5" width="14" height="12" fill="#fff" stroke="#3c4f70"/><path d="M3 3.500h1M3 6.500h1M3 9.500h1M6 3.500h6M6 6.500h6M6 9.500h6" stroke="#3c4f70"/></g>
<path d="M1248 218l-7 8h3l-3 7 8-9h-3l4-6z" fill="#eab83e" stroke="#a7711c" stroke-width=".6"/>
<g transform="translate(1266,219)" opacity=".55"><rect x=".5" y="2.500" width="14" height="11" fill="#e6e9ee" stroke="#77818f"/><rect x="3" y="1" width="6" height="3" fill="#c5ced9" stroke="#77818f"/><path d="M3 7h9M3 10h6" stroke="#77818f"/></g>
</svg>
<div class="t" style="left:21px;top:33px;color:#111;letter-spacing:.12px">experiment bunifu 1 - Microsoft Visual Studio</div>
</body></html>
